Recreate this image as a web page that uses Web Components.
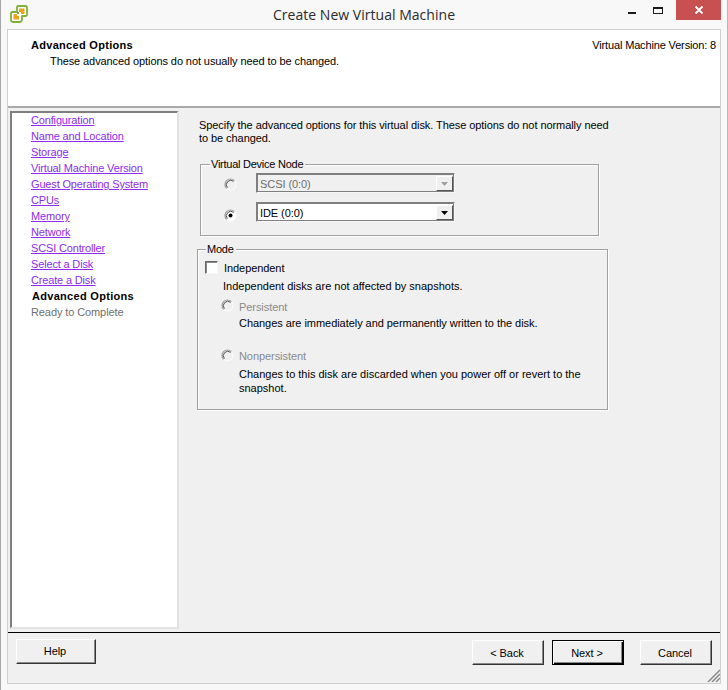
<!DOCTYPE html>
<html>
<head>
<meta charset="utf-8">
<title>Create New Virtual Machine</title>
<style>
    html, body { margin: 0; padding: 0; }
    body { font: 11px/13px "Liberation Sans", sans-serif; color: #000; background: #f8f8f8; }
</style>
</head>
<body>
<wizard-window>
    <title-bar slot="title">Create New Virtual Machine</title-bar>
    <wizard-header slot="header" heading="Advanced Options" version="Virtual Machine Version: 8">These advanced options do not usually need to be changed.</wizard-header>
    <step-list slot="steps"></step-list>
    <advanced-page slot="page"></advanced-page>
    <wizard-footer slot="footer"></wizard-footer>
</wizard-window>

<script>
const FONT = '"Liberation Sans", sans-serif';

class WizardWindow extends HTMLElement {
    constructor() {
        super();
        this.attachShadow({ mode: 'open' });
        this.shadowRoot.innerHTML = `
            <style>
                :host {
                    display: flex;
                    flex-direction: column;
                    position: relative;
                    box-sizing: border-box;
                    width: 728px;
                    height: 690px;
                    overflow: hidden;
                    background: #f8f8f8;
                    border-left: 1px solid #a8a8a8;
                    border-right: 1px solid #b8b8b8;
                    font: 11px/13px ${FONT};
                    letter-spacing: -0.07px;
                }
                .client {
                    display: flex;
                    flex-direction: column;
                    height: 655px;
                    margin: 0 6px 0 6px;
                    background: #f0f0f0;
                    border: 1px solid #d0d0d0;
                    box-sizing: border-box;
                }
                .middle {
                    display: flex;
                    height: 518px;
                    margin-top: 3px;
                }
            </style>
            <slot name="title"></slot>
            <div class="client">
                <slot name="header"></slot>
                <div class="middle">
                    <slot name="steps"></slot>
                    <slot name="page"></slot>
                </div>
                <slot name="footer"></slot>
            </div>
        `;
    }
}

class TitleBar extends HTMLElement {
    constructor() {
        super();
        this.attachShadow({ mode: 'open' });
        this.shadowRoot.innerHTML = `
            <style>
                :host {
                    display: flex;
                    position: relative;
                    height: 29px;
                    flex: none;
                    padding-left: 9px;
                }
                svg { display: block; }
                .logo { margin-top: 5px; }
                .text {
                    position: absolute;
                    left: 0;
                    right: 0;
                    top: 6px;
                    text-align: center;
                    font: 14px/18px "Open Sans", sans-serif;
                    letter-spacing: 0.03px;
                    color: #2b2b2b;
                }
                .controls {
                    display: flex;
                    margin-left: auto;
                    margin-right: 6px;
                    height: 20px;
                    z-index: 1;
                }
                .ctl { width: 26px; display: flex; justify-content: center; }
                .close { width: 45px; height: 20px; background: #c75050; display: flex; align-items: center; justify-content: center; margin-left: 5px; }
            </style>
            <svg class="logo" width="18" height="18" viewBox="0 0 18 18">
                <path d="M7 2.2a1.4 1.4 0 0 1 1.4-1.2h6.8A1.8 1.8 0 0 1 17 2.8v6.8a1.4 1.4 0 0 1-1.4 1.4H12v3.2a2.8 2.8 0 0 1-2.8 2.8H2.8A1.8 1.8 0 0 1 1 15.2V8.4A1.4 1.4 0 0 1 2.4 7H7z" fill="#fff" stroke="#7fb03a" stroke-width="1.8" stroke-linejoin="round"/>
                <path d="M9 3.5h5.5V9H11V7H9z" fill="#e9a41c"/>
                <path d="M3.5 9H7v2h2v3.5H3.5z" fill="#e9a41c"/>
                <path d="M7 7h2v2H7z" fill="#8c8c5a"/>
            </svg>
            <div class="text"><slot></slot></div>
            <div class="controls">
                <div class="ctl"><svg width="10" height="20"><rect x="1" y="12" width="8" height="2" fill="#1a1a1a"/></svg></div>
                <div class="ctl"><svg width="10" height="20"><rect x="0.5" y="7.5" width="9" height="6" fill="none" stroke="#1a1a1a"/><rect x="0" y="7" width="10" height="2" fill="#1a1a1a"/></svg></div>
                <div class="close"><svg width="10" height="10" viewBox="0 0 10 10"><path d="M1.5 1.5l7 7M8.5 1.5l-7 7" stroke="#fff" stroke-width="1.8"/></svg></div>
            </div>
        `;
    }
}

class WizardHeader extends HTMLElement {
    constructor() {
        super();
        this.attachShadow({ mode: 'open' });
        this.shadowRoot.innerHTML = `
            <style>
                :host {
                    display: flex;
                    justify-content: space-between;
                    box-sizing: border-box;
                    flex: none;
                    height: 78px;
                    padding: 9px 4px 0 23px;
                    background: #fff;
                    border-bottom: 2px solid #a9a9a9;
                }
                .title { font-weight: bold; letter-spacing: 0.3px; }
                .desc { margin: 3px 0 0 19px; letter-spacing: -0.09px; }
                .version { letter-spacing: -0.15px; }
            </style>
            <div>
                <div class="title">${this.getAttribute('heading')}</div>
                <div class="desc"><slot></slot></div>
            </div>
            <div class="version">${this.getAttribute('version')}</div>
        `;
    }
}

class StepList extends HTMLElement {
    constructor() {
        super();
        this.attachShadow({ mode: 'open' });
        const links = ['Configuration', 'Name and Location', 'Storage', 'Virtual Machine Version',
            'Guest Operating System', 'CPUs', 'Memory', 'Network', 'SCSI Controller', 'Select a Disk', 'Create a Disk'];
        this.shadowRoot.innerHTML = `
            <style>
                :host {
                    display: block;
                    box-sizing: border-box;
                    flex: none;
                    width: 169px;
                    margin-left: 2px;
                    padding: 0 0 0 20px;
                    background: #fff;
                    border-style: solid;
                    border-width: 1px 2px 2px 1px;
                    border-color: #7f7f7f #e3e3e3 #e3e3e3 #7f7f7f;
                    box-shadow: inset 1px 1px 0 #7f7f7f;
                    letter-spacing: -0.16px;
                }
                div { height: 16px; line-height: 16px; white-space: nowrap; }
                a { color: #8f2cf0; text-decoration: underline; }
                .current { font-weight: bold; letter-spacing: 0.3px; margin-left: 1px; }
                .todo { color: #707070; letter-spacing: -0.1px; }
            </style>
            ${links.map(link => `<div><a href="#">${link}</a></div>`).join('')}
            <div class="current">Advanced Options</div>
            <div class="todo">Ready to Complete</div>
        `;
    }
}

class GroupBox extends HTMLElement {
    constructor() {
        super();
        this.attachShadow({ mode: 'open' });
        this.shadowRoot.innerHTML = `
            <style>
                :host {
                    display: block;
                    position: relative;
                    box-sizing: border-box;
                    border: 1px solid #a0a0a0;
                    box-shadow: 1px 1px 0 #fff, inset 1px 1px 0 #fff;
                }
                .legend {
                    position: absolute;
                    top: -7px;
                    left: var(--legend-left, 9px);
                    padding: 0 2px 0 1px;
                    background: #f0f0f0;
                    letter-spacing: -0.25px;
                }
            </style>
            <div class="legend">${this.getAttribute('label')}</div>
            <slot></slot>
        `;
    }
}

class WinRadio extends HTMLElement {
    constructor() {
        super();
        this.attachShadow({ mode: 'open' });
        this.shadowRoot.innerHTML = `
            <style>
                :host { display: block; width: 13px; height: 13px; flex: none; }
                svg { display: block; }
            </style>
            <svg width="13" height="13" viewBox="0 0 13 13">
                <circle cx="6.5" cy="6.5" r="5.5" fill="${this.hasAttribute('disabled') ? '#f0f0f0' : '#fff'}" stroke="#fff"/>
                <path d="M2.6 10.4A5.5 5.5 0 0 1 10.4 2.6" fill="none" stroke="#9a9a9a" stroke-width="1.2"/>
                <path d="M3.4 9.6A4.4 4.4 0 0 1 9.6 3.4" fill="none" stroke="#505050" stroke-width="1"/>
                ${this.hasAttribute('checked') ? '<circle cx="6.5" cy="6.5" r="2" fill="#000"/>' : ''}
            </svg>
        `;
    }
}

class WinCheckbox extends HTMLElement {
    constructor() {
        super();
        this.attachShadow({ mode: 'open' });
        this.shadowRoot.innerHTML = `
            <style>
                :host {
                    display: block;
                    box-sizing: border-box;
                    width: 13px;
                    height: 13px;
                    flex: none;
                    background: #fff;
                    border-style: solid;
                    border-width: 1px;
                    border-color: #666 #f8f8f8 #f8f8f8 #666;
                    box-shadow: inset 1px 1px 0 #888;
                }
            </style>
        `;
    }
}

class WinCombo extends HTMLElement {
    constructor() {
        super();
        this.attachShadow({ mode: 'open' });
        const off = this.hasAttribute('disabled');
        this.shadowRoot.innerHTML = `
            <style>
                :host {
                    display: flex;
                    box-sizing: border-box;
                    width: 199px;
                    height: 20px;
                    padding: 2px 1px 1px 2px;
                    background: ${off ? '#f0f0f0' : '#fff'};
                    color: ${off ? '#6d6d6d' : '#000'};
                    border: 1px solid;
                    border-color: #7f7f7f #f8f8f8 #f8f8f8 #7f7f7f;
                    box-shadow: inset 1px 1px 0 #7f7f7f, inset -1px -1px 0 #7f7f7f;
                }
                .value { flex: 1; line-height: 17px; padding-left: 1px; }
                .arrow {
                    box-sizing: border-box;
                    width: 17px;
                    height: 15px;
                    background: #f0f0f0;
                    border-style: solid;
                    border-width: 1px;
                    border-color: #fff #555 #555 #fff;
                    display: flex;
                    align-items: center;
                    justify-content: center;
                }
                svg { display: block; }
            </style>
            <div class="value"><slot></slot></div>
            <div class="arrow"><svg width="7" height="4"><path d="M0 0h7L3.5 4z" fill="${off ? '#a0a0a0' : '#000'}"/></svg></div>
        `;
    }
}

class AdvancedPage extends HTMLElement {
    constructor() {
        super();
        this.attachShadow({ mode: 'open' });
        this.shadowRoot.innerHTML = `
            <style>
                :host {
                    display: block;
                    flex: 1;
                    padding: 8px 0 0 20px;
                }
                .intro { width: 420px; }
                .node { width: 399px; height: 72px; margin: 19px 0 0 1px; padding: 8px 0 0 23px; box-sizing: border-box; }
                .row { display: flex; align-items: center; height: 20px; }
                .row + .row { margin-top: 9px; }
                .row win-radio { margin: 2px 19px 0 0; }
                .row + .row win-radio { margin-top: 6px; }
                .mode { width: 411px; height: 161px; margin: 13px 0 0 -2px; padding: 11px 0 0 7px; box-sizing: border-box; --legend-left: 8px; }
                .check { display: flex; gap: 6px; height: 13px; }
                .check span { padding-top: 1px; }
                .note { margin: 6px 0 0 18px; letter-spacing: 0; }
                .opt { display: flex; gap: 5px; margin-left: 16px; color: #8a8a8a; }
                .opt.first { margin-top: 6px; }
                .opt.first span { margin-top: 2px; }
                .opt.second { margin-top: 19px; }
                .opt.second span { margin-top: 1px; }
                .desc { margin: 2px 0 0 34px; width: 360px; line-height: 14px; letter-spacing: -0.05px; }
                .desc.tall { margin-top: 4px; letter-spacing: 0; }
            </style>
            <div class="intro">Specify the advanced options for this virtual disk. These options do not normally need to be changed.</div>
            <group-box class="node" label="Virtual Device Node">
                <div class="row"><win-radio disabled></win-radio><win-combo disabled>SCSI (0:0)</win-combo></div>
                <div class="row"><win-radio checked></win-radio><win-combo>IDE (0:0)</win-combo></div>
            </group-box>
            <group-box class="mode" label="Mode">
                <div class="check"><win-checkbox></win-checkbox><span>Independent</span></div>
                <div class="note">Independent disks are not affected by snapshots.</div>
                <div class="opt first"><win-radio disabled></win-radio><span>Persistent</span></div>
                <div class="desc">Changes are immediately and permanently written to the disk.</div>
                <div class="opt second"><win-radio disabled></win-radio><span>Nonpersistent</span></div>
                <div class="desc tall">Changes to this disk are discarded when you power off or revert to the snapshot.</div>
            </group-box>
        `;
    }
}

class WinButton extends HTMLElement {
    constructor() {
        super();
        this.attachShadow({ mode: 'open' });
        this.shadowRoot.innerHTML = `
            <style>
                :host {
                    display: flex;
                    align-items: center;
                    justify-content: center;
                    box-sizing: border-box;
                    width: var(--button-width, 72px);
                    height: 25px;
                    flex: none;
                    padding-right: 2px;
                    background: #f0f0f0;
                    border-style: solid;
                    border-width: 1px;
                    border-color: #fff #333 #333 #fff;
                    box-shadow: inset -1px -1px 0 #8a8a8a;
                }
                :host([default]) {
                    border: 1px solid #000;
                    box-shadow: inset 1px 1px 0 #fff, inset -1px -1px 0 #000, inset -2px -2px 0 #8a8a8a;
                }
            </style>
            <slot></slot>
        `;
    }
}

class WizardFooter extends HTMLElement {
    constructor() {
        super();
        this.attachShadow({ mode: 'open' });
        this.shadowRoot.innerHTML = `
            <style>
                :host {
                    display: flex;
                    box-sizing: border-box;
                    flex: none;
                    margin-top: 3px;
                    padding: 6px 8px 0 8px;
                    border-top: 1px solid #000;
                }
                .help { --button-width: 80px; }
                .nav { display: flex; margin-left: auto; margin-top: 1px; }
                .nav win-button { padding-top: 1px; }
                .next { margin-left: 8px; }
                .cancel { margin-left: 16px; }
                .grip { position: absolute; right: 7px; bottom: 8px; }
            </style>
            <win-button class="help">Help</win-button>
            <div class="nav">
                <win-button>&lt; Back</win-button>
                <win-button class="next" default>Next &gt;</win-button>
                <win-button class="cancel">Cancel</win-button>
            </div>
            <svg class="grip" width="13" height="13" viewBox="0 0 13 13">
                <path d="M13 1L1 13M13 5L5 13M13 9L9 13" stroke="#8a8a8a" stroke-width="1.5"/>
            </svg>
        `;
    }
}

customElements.define('wizard-window', WizardWindow);
customElements.define('title-bar', TitleBar);
customElements.define('wizard-header', WizardHeader);
customElements.define('step-list', StepList);
customElements.define('group-box', GroupBox);
customElements.define('win-radio', WinRadio);
customElements.define('win-checkbox', WinCheckbox);
customElements.define('win-combo', WinCombo);
customElements.define('advanced-page', AdvancedPage);
customElements.define('win-button', WinButton);
customElements.define('wizard-footer', WizardFooter);
</script>
</body>
</html>
